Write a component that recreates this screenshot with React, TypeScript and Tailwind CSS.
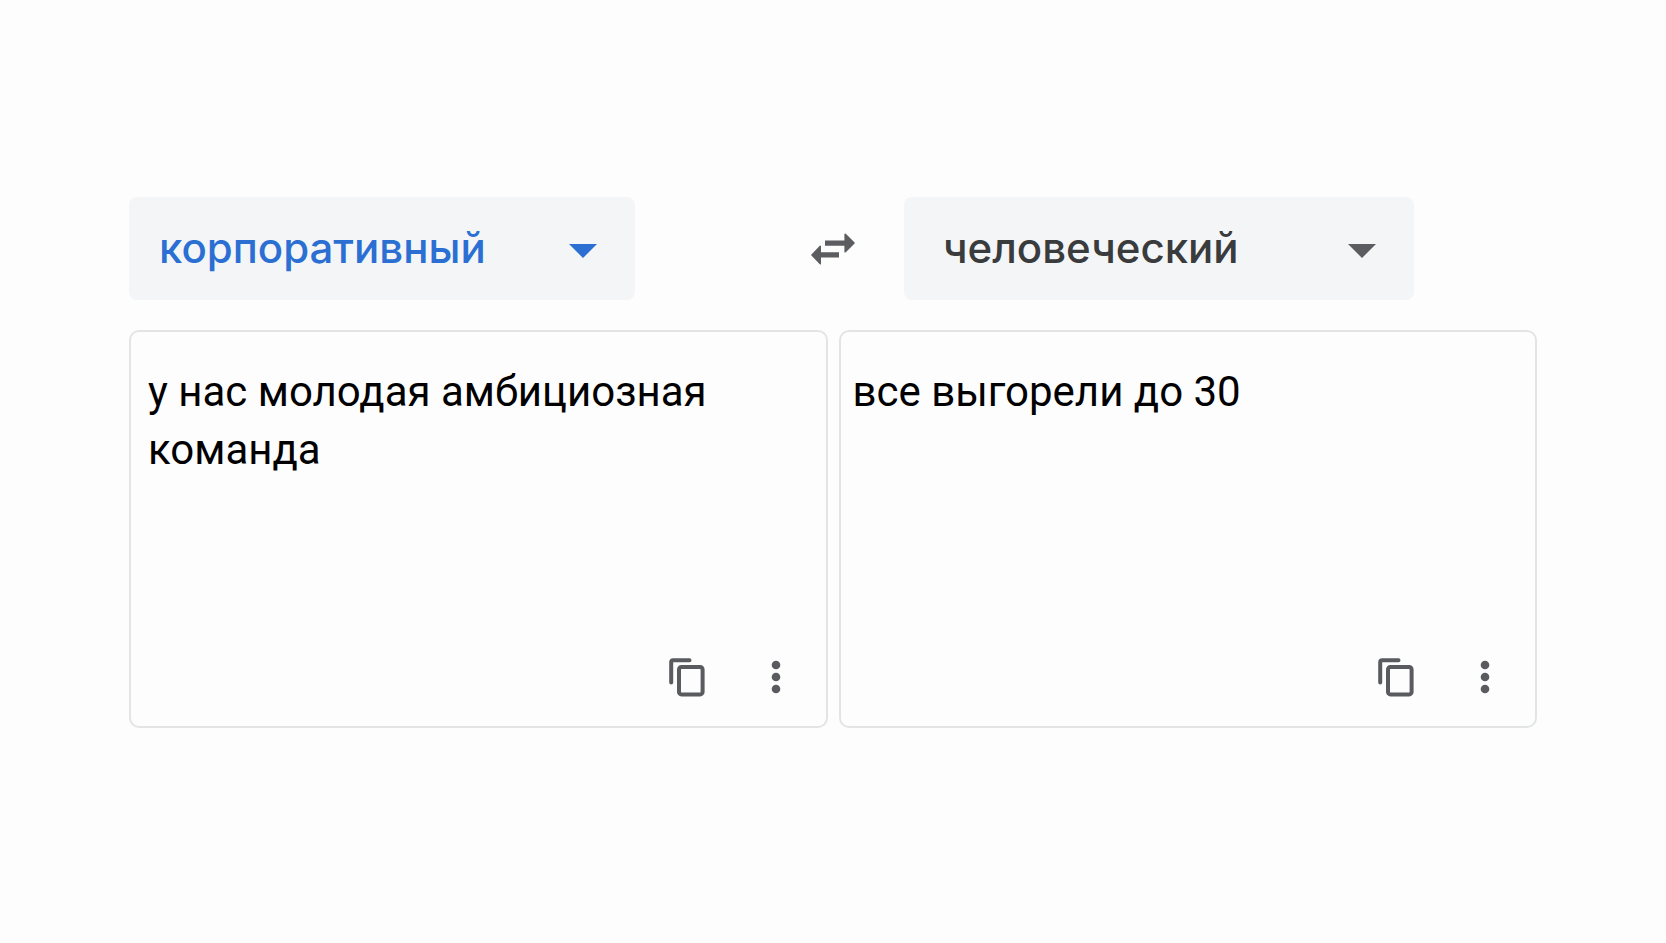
import { useState } from "react";

function CaretIcon() {
  return (
    <svg viewBox="0 0 28 14" className="h-[14px] w-[28px]" fill="currentColor" aria-hidden="true">
      <path d="M0 0H28L14 14Z" />
    </svg>
  );
}

function SwapIcon() {
  return (
    <svg viewBox="0 0 44 32" className="h-8 w-11" fill="currentColor" aria-hidden="true">
      <path d="M14 7.4H33.4V1Q33.8 0 34.8 0.8L43.6 9.4Q44 10 43.6 10.6L34.8 19.2Q33.8 20 33.4 19V12.8H14Z" />
      <path d="M28 24.6H10V31Q9.6 32 8.8 31.2L0.4 22.6Q0 22 0.4 21.4L8.8 12.8Q9.6 12 10 13V19.2H28Z" />
    </svg>
  );
}

function CopyIcon() {
  return (
    <svg
      viewBox="0 0 40 40"
      className="size-10"
      fill="none"
      stroke="currentColor"
      strokeWidth="4"
      strokeLinecap="round"
      strokeLinejoin="round"
      aria-hidden="true"
    >
      <path d="M4.2 25.5V5.2Q4.2 3.2 6.2 3.2H22.5" />
      <rect x="12" y="10" width="23.6" height="27.4" rx="2.4" />
    </svg>
  );
}

function MoreIcon() {
  return (
    <svg viewBox="0 0 24 40" className="h-10 w-6" fill="currentColor" aria-hidden="true">
      <circle cx="12" cy="8" r="4.3" />
      <circle cx="12" cy="20" r="4.3" />
      <circle cx="12" cy="32" r="4.3" />
    </svg>
  );
}

const languages = ["корпоративный", "человеческий"];

type LanguageSelectProps = {
  label: string;
  value: string;
  onChange: (value: string) => void;
  className: string;
  fieldClassName: string;
};

function LanguageSelect({ label, value, onChange, className, fieldClassName }: LanguageSelectProps) {
  return (
    <div className={`relative rounded-lg bg-[#f3f5f7] ${className}`}>
      <select
        aria-label={label}
        value={value}
        onChange={(e) => onChange(e.target.value)}
        className={`block h-[103px] w-full cursor-pointer appearance-none rounded-lg bg-transparent pr-20 pb-[2px] font-[Inter,sans-serif] text-[42px] font-medium ${fieldClassName}`}
      >
        {languages.map((language) => (
          <option key={language}>{language}</option>
        ))}
      </select>
      <span className="pointer-events-none absolute inset-y-0 right-[38px] flex items-center pt-1">
        <CaretIcon />
      </span>
    </div>
  );
}

function PanelActions() {
  return (
    <div className="flex justify-end gap-[57px] pr-[38px] text-[#595b5f]">
      <button type="button" aria-label="Копировать" className="cursor-pointer">
        <CopyIcon />
      </button>
      <button type="button" aria-label="Ещё" className="cursor-pointer">
        <MoreIcon />
      </button>
    </div>
  );
}

const panel = "flex min-h-[398px] flex-col rounded-[10px] border-2 border-[#e3e4e5] pt-[31px] pb-[29px]";
const panelText = "w-full flex-1 text-[42px] leading-[58px] text-black";

export default function App() {
  const [from, setFrom] = useState(languages[0]);
  const [to, setTo] = useState(languages[1]);
  const [text, setText] = useState("у нас молодая амбициозная команда");
  const [result, setResult] = useState("все выгорели до 30");

  const swap = () => {
    setFrom(to);
    setTo(from);
    setText(result);
    setResult(text);
  };

  return (
    <div className="min-h-screen bg-[#fdfdfd] px-6 pt-[197px] pb-12 font-[Roboto,sans-serif]">
      <main className="mx-auto flex w-full max-w-[1408px] flex-col gap-[30px]">
        <div className="grid grid-cols-[1fr_142px_1fr] items-center">
          <LanguageSelect
            label="Исходный язык"
            value={from}
            onChange={setFrom}
            className="w-4/5 text-[#2b6fd3]"
            fieldClassName="pl-[30px]"
          />
          <button
            type="button"
            aria-label="Поменять языки местами"
            onClick={swap}
            className="flex cursor-pointer justify-center text-[#5b5d61]"
          >
            <SwapIcon />
          </button>
          <LanguageSelect
            label="Язык перевода"
            value={to}
            onChange={setTo}
            className="w-[80.5%] text-[#5b5d61]"
            fieldClassName="pl-[39px] text-[#3a3b3d]"
          />
        </div>
        <div className="grid grid-cols-2 gap-[11px]">
          <section className={panel}>
            <textarea
              aria-label="Исходный текст"
              value={text}
              onChange={(e) => setText(e.target.value)}
              className={`resize-none bg-transparent px-[17px] outline-none ${panelText}`}
            />
            <PanelActions />
          </section>
          <section className={panel}>
            <output aria-label="Перевод" className={`block px-3 ${panelText}`}>
              {result}
            </output>
            <PanelActions />
          </section>
        </div>
      </main>
    </div>
  );
}
